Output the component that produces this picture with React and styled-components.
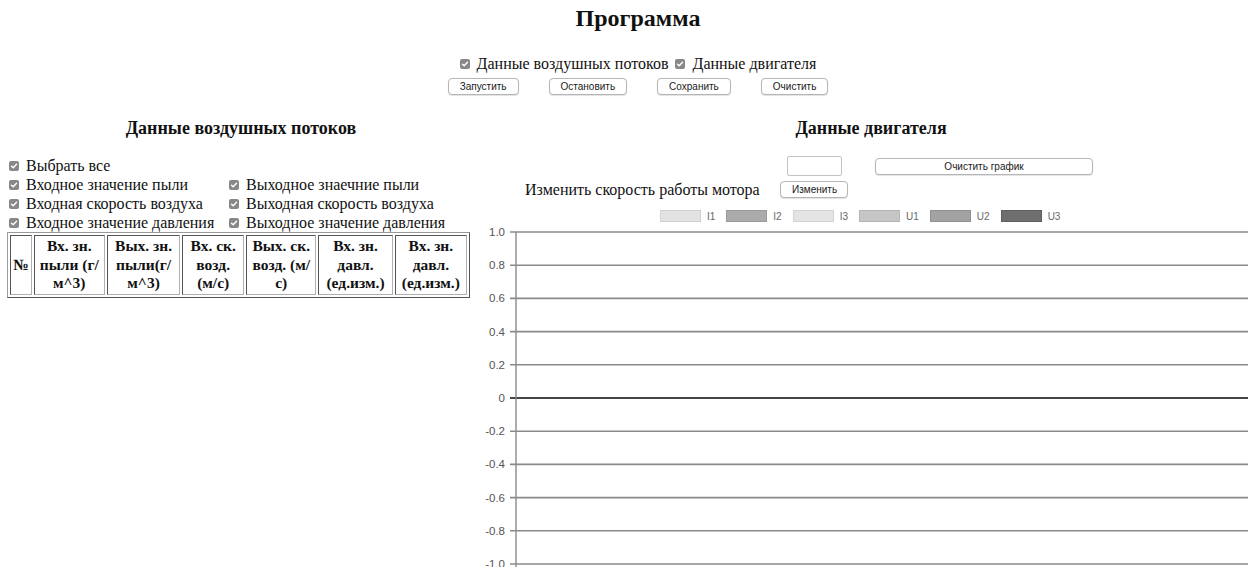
import React from "react";
import styled, { createGlobalStyle } from "styled-components";

const GlobalStyle = createGlobalStyle`
  html, body {
    margin: 0;
    padding: 0;
    overflow: hidden;
    background: #fff;
    color: #111;
    font-family: "Liberation Serif", "Times New Roman", serif;
  }
`;

// the page is a little wider than the window, the chart runs off the right edge
const Page = styled.div`
  width: 1276px;
`;

const Title = styled.h1`
  margin: 6px 0 0;
  font-size: 24px;
  line-height: 24px;
  font-weight: 700;
  text-align: center;
`;

const TopChecks = styled.div`
  margin-top: 26px;
  display: flex;
  justify-content: center;
  align-items: center;
  gap: 7px;
  font-size: 16px;
  line-height: 16px;
`;

const CheckLabel = styled.label`
  display: inline-flex;
  align-items: center;
  gap: 7px;
  white-space: nowrap;
`;

const Box = styled.span`
  display: inline-flex;
  align-items: center;
  justify-content: center;
  width: 10px;
  height: 10px;
  border-radius: 2px;
  background: #888;
  flex: none;
`;

const ButtonRow = styled.div`
  margin-top: 6px;
  display: flex;
  justify-content: center;
  gap: 30px;
`;

const Button = styled.button`
  height: ${({ h }) => h || 17}px;
  width: ${({ w }) => (w ? `${w}px` : "auto")};
  padding: 0 11px;
  border: 1px solid #b5b5b5;
  border-radius: 4px;
  background: #fff;
  color: #1a1a1a;
  font-family: "Liberation Sans", Arial, sans-serif;
  font-size: 10px;
  line-height: 15px;
  cursor: pointer;
  box-shadow: 0 1px 1px rgba(0, 0, 0, 0.12);
`;

const Columns = styled.div`
  margin-top: 24px;
  display: grid;
  grid-template-columns: 470px 1fr;
  column-gap: 8px;
`;

const Heading = styled.h2`
  margin: 0;
  font-size: 18px;
  line-height: 18px;
  font-weight: 700;
  text-align: center;
  padding-left: ${({ pl }) => pl || 0}px;
  padding-right: ${({ pr }) => pr || 0}px;
`;

const LeftPanel = styled.section``;

const CheckGrid = styled.div`
  margin-top: 19px;
  padding-left: 9px;
  display: grid;
  grid-template-columns: 220px auto;
  grid-auto-rows: 19px;
  align-items: center;
  font-size: 16px;
`;

const Table = styled.table`
  margin: 0 0 0 7px;
  width: 463px;
  border: 1px solid #9a9a9a;
  border-right-color: #555;
  border-bottom-color: #555;
  border-spacing: 2px;
  table-layout: fixed;
`;

const Th = styled.th`
  width: ${({ w }) => w}px;
  padding: 1px ${({ px }) => px || 0}px;
  border: 1px solid #555;
  border-right-color: #b0b0b0;
  border-bottom-color: #b0b0b0;
  font-size: 15.5px;
  line-height: 18.5px;
  font-weight: 700;
  text-align: center;
  vertical-align: middle;
`;

const RightPanel = styled.section``;

const Controls = styled.div`
  margin-top: 19px;
  padding-left: 47px;
  display: grid;
  grid-template-columns: 235px 68px 218px;
  grid-template-rows: 20px 17px;
  column-gap: 20px;
  row-gap: 5px;
  align-items: center;
`;

const SpeedInput = styled.input`
  justify-self: center;
  width: 55px;
  height: 20px;
  box-sizing: border-box;
  border: 1px solid #c4c4c4;
  border-radius: 2px;
  padding: 0 3px;
  font-size: 11px;
`;

const MotorLabel = styled.span`
  grid-column: 1;
  grid-row: 2;
  font-size: 16px;
  line-height: 17px;
  white-space: nowrap;
`;

const Legend = styled.div`
  margin-top: 12px;
  padding-left: 182px;
  display: flex;
  align-items: center;
  height: 12px;
`;

const LegendItem = styled.span`
  display: inline-flex;
  align-items: center;
  gap: 6px;
  margin-right: 11px;
  font-family: "Liberation Sans", Arial, sans-serif;
  font-size: 10px;
  color: #666;
`;

const Swatch = styled.span`
  display: inline-block;
  width: 39px;
  height: 10px;
  border: 1px solid ${({ edge }) => edge};
  background: ${({ fill }) => fill};
`;

const ChartSvg = styled.svg`
  display: block;
  margin-top: 2px;
`;

function Check() {
  return (
    <Box>
      <svg width="8" height="8" viewBox="0 0 8 8">
        <path d="M1.5 4.2 L3.2 5.8 L6.5 2.2" fill="none" stroke="#fff" strokeWidth="1.4" strokeLinecap="round" strokeLinejoin="round" />
      </svg>
    </Box>
  );
}

const legend = [
  { name: "I1", fill: "#e2e2e2", edge: "#d0d0d0" },
  { name: "I2", fill: "#ababab", edge: "#9a9a9a" },
  { name: "I3", fill: "#e4e4e4", edge: "#d2d2d2" },
  { name: "U1", fill: "#c6c6c6", edge: "#b4b4b4" },
  { name: "U2", fill: "#a2a2a2", edge: "#909090" },
  { name: "U3", fill: "#6f6f6f", edge: "#606060" },
];

const columns = [
  { w: 19, text: "№" },
  { w: 67, text: "Вх. зн. пыли (г/ м^3)" },
  { w: 69, text: "Вых. зн. пыли(г/ м^3)" },
  { w: 50, px: 4, text: "Вх. ск. возд. (м/с)" },
  { w: 66, text: "Вых. ск. возд. (м/ с)" },
  { w: 70, text: "Вх. зн. давл. (ед.изм.)" },
  { w: 68, text: "Вх. зн. давл. (ед.изм.)" },
];

const ticks = ["1.0", "0.8", "0.6", "0.4", "0.2", "0", "-0.2", "-0.4", "-0.6", "-0.8", "-1.0"];

function Chart() {
  const top = 8;
  const step = 33.2;
  const axisX = 38;
  const width = 798;
  return (
    <ChartSvg width={width} height={350}>
      {ticks.map((t, i) => {
        const y = top + i * step;
        const zero = t === "0";
        return (
          <g key={t}>
            <line x1={axisX - 6} x2={width} y1={y} y2={y} stroke={zero ? "#444" : "#8a8a8a"} strokeWidth={zero ? 2 : 1.6} />
            <text x={axisX - 11} y={y + 4} textAnchor="end" fontFamily="Liberation Sans, Arial, sans-serif" fontSize="11.5" fill="#555">
              {t}
            </text>
          </g>
        );
      })}
      <line x1={axisX} x2={axisX} y1={top} y2={350} stroke="#8a8a8a" strokeWidth="1.4" />
    </ChartSvg>
  );
}

export default function App() {
  return (
    <Page>
      <GlobalStyle />
      <Title>Программа</Title>
      <TopChecks>
        <CheckLabel>
          <Check />
          Данные воздушных потоков
        </CheckLabel>
        <CheckLabel>
          <Check />
          Данные двигателя
        </CheckLabel>
      </TopChecks>
      <ButtonRow>
        <Button>Запустить</Button>
        <Button>Остановить</Button>
        <Button>Сохранить</Button>
        <Button>Очистить</Button>
      </ButtonRow>

      <Columns>
        <LeftPanel>
          <Heading pl={12}>Данные воздушных потоков</Heading>
          <CheckGrid>
            <CheckLabel>
              <Check />
              Выбрать все
            </CheckLabel>
            <span />
            <CheckLabel>
              <Check />
              Входное значение пыли
            </CheckLabel>
            <CheckLabel>
              <Check />
              Выходное знаечние пыли
            </CheckLabel>
            <CheckLabel>
              <Check />
              Входная скорость воздуха
            </CheckLabel>
            <CheckLabel>
              <Check />
              Выходная скорость воздуха
            </CheckLabel>
            <CheckLabel>
              <Check />
              Входное значение давления
            </CheckLabel>
            <CheckLabel>
              <Check />
              Выходное значение давления
            </CheckLabel>
          </CheckGrid>
          <Table>
            <thead>
              <tr>
                {columns.map((c, i) => (
                  <Th key={i} w={c.w} px={c.px}>
                    {c.text}
                  </Th>
                ))}
              </tr>
            </thead>
          </Table>
        </LeftPanel>

        <RightPanel>
          <Heading pr={12}>Данные двигателя</Heading>
          <Controls>
            <span />
            <SpeedInput type="text" />
            <Button style={{ marginLeft: 7 }} w={218}>
              Очистить график
            </Button>
            <MotorLabel>Изменить скорость работы мотора</MotorLabel>
            <Button>Изменить</Button>
          </Controls>
          <Legend>
            {legend.map((l) => (
              <LegendItem key={l.name}>
                <Swatch fill={l.fill} edge={l.edge} />
                {l.name}
              </LegendItem>
            ))}
          </Legend>
          <Chart />
        </RightPanel>
      </Columns>
    </Page>
  );
}
